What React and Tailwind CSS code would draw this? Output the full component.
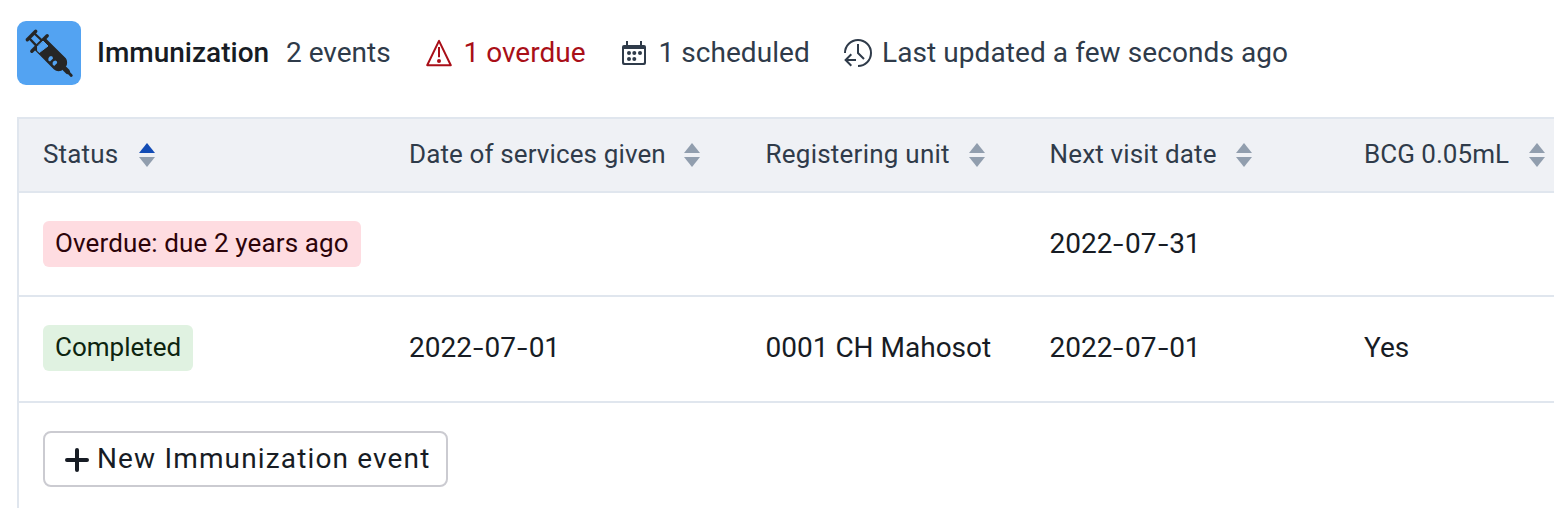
function SyringeIcon() {
  return (
    <svg width="64" height="64" viewBox="0 0 64 64" fill="none" stroke="#262626" strokeLinecap="round" strokeLinejoin="round">
      <path d="M18.7 10.3 10.3 18.7" strokeWidth="3.4" />
      <path d="M17.5 12.5 26 20.5M12.5 17.5 20.5 25.8" strokeWidth="2.4" />
      <path d="M30.2 14.8 14.8 30.2" strokeWidth="3.4" />
      <path d="M28.3 18 48 37.6Q50 40 49 44L44 49Q40 50 37.6 48L18 28.3Z" fill="#262626" strokeWidth="1.6" />
      <path d="M26.3 20.3 31 25 22.3 31.6 20.6 29.8V25.4Z" fill="#53a3f2" stroke="#53a3f2" strokeWidth="1" />
      <path d="M31.4 39.4V37.4Q31.9 35.2 34 35Q36.2 35.2 36 37.4L33 40.6Z" fill="#53a3f2" stroke="none" />
      <path d="M35.6 43.6V41.8Q36 39.8 38.2 39.5Q40.4 39.8 40.2 42L37.2 45Z" fill="#53a3f2" stroke="none" />
      <path d="M46 46 50.5 50.5" strokeWidth="5" />
      <path d="M50 50 54.3 54.5" strokeWidth="2.8" />
    </svg>
  );
}

function WarningIcon() {
  return (
    <svg width="28" height="30" viewBox="0 0 28 30" fill="none" stroke="#a90f18" strokeWidth="2" strokeLinejoin="round">
      <path d="M14 2.9 2.2 27.2H25.8Z" />
      <path d="M14 9V19.3" />
      <circle cx="14" cy="23" r="2" fill="#a90f18" stroke="none" />
    </svg>
  );
}

function CalendarIcon() {
  return (
    <svg width="24" height="24" viewBox="0 0 24 24" fill="#2f3b4a">
      <path fillRule="evenodd" d="M2 4H4V0H6V4H18V0H20V4H22Q24 4 24 6V22Q24 24 22 24H2Q0 24 0 22V6Q0 4 2 4ZM2 8V21Q2 22 3 22H21Q22 22 22 21V8Z" />
      <circle cx="7" cy="12" r="2" />
      <circle cx="12.3" cy="12" r="2" />
      <circle cx="18" cy="12" r="2" />
      <circle cx="7" cy="18" r="2" />
      <circle cx="12.3" cy="18" r="2" />
    </svg>
  );
}

function ClockIcon() {
  return (
    <svg width="28" height="28" viewBox="0 0 28 28" fill="none" stroke="#2f3b4a" strokeWidth="2">
      <path d="M1 14A13 13 0 1 1 14 27" />
      <path d="M14 5V14L20 20" />
      <path d="M12 21H1.6M7.3 15.3 1.6 21 7.3 26.7" />
    </svg>
  );
}

function SortIcon({ active }) {
  return (
    <svg className="mt-0.5 shrink-0" width="16" height="24" viewBox="0 0 16 24">
      <path d="M8 0 16 10H0Z" fill={active ? '#134cb5' : '#919eae'} />
      <path d="M0 14H16L8 24Z" fill="#919eae" />
    </svg>
  );
}

function HeadCell({ children, gap, spacing = 'tracking-[0.15px]', active }) {
  return (
    <div className={`flex items-center whitespace-nowrap ${gap}`}>
      <span className={spacing}>{children}</span>
      <SortIcon active={active} />
    </div>
  );
}

function DateText({ value }) {
  const [y, m, d] = value.split('-');
  const dash = <span className="inline-block w-[12.6px] scale-x-[1.35] text-center">-</span>;
  return <span>{y}{dash}{m}{dash}{d}</span>;
}

const columns = 'grid grid-cols-[366px_356.5px_284px_314.5px_230px] items-center pl-6 w-[1575px]';

export default function App() {
  return (
    <div className="h-[508px] w-full overflow-hidden bg-white pl-[17px] pt-[21px] font-['Roboto',sans-serif] text-[28px] leading-8 text-[#171c24]">
      <header className="flex h-16 items-center whitespace-nowrap text-[#2f3b4a]">
        <div className="h-16 w-16 shrink-0 rounded-[9px] bg-[#53a3f2]"><SyringeIcon /></div>
        <h1 className="ml-4 w-[189px] font-medium text-[#171c24]">Immunization</h1>
        <span className="w-[139px]">2 events</span>
        <div className="flex w-[197px] items-center gap-[10.5px] text-[#a90f18]">
          <WarningIcon /><span>1 overdue</span>
        </div>
        <div className="flex w-[222px] items-center gap-[12.5px] text-[#2f3b4a]">
          <CalendarIcon /><span className="tracking-[0.05px]">1 scheduled</span>
        </div>
        <div className="flex items-center gap-2.5">
          <ClockIcon /><span className="tracking-[0.08px]">Last updated a few seconds ago</span>
        </div>
      </header>

      <section className="mt-8 h-[391px] w-full border-l-2 border-t-2 border-[#e0e6ee]">
        <div className={`${columns} h-[74px] border-b-2 border-[#e0e6ee] bg-[#eff1f5] pb-0.5 text-[26px] text-[#2f3b4a]`}>
          <HeadCell gap="gap-[21px]" active>Status</HeadCell>
          <HeadCell gap="gap-[18.5px]" spacing="tracking-[0.12px]">Date of services given</HeadCell>
          <HeadCell gap="gap-[19px]" spacing="tracking-[0.24px]">Registering unit</HeadCell>
          <HeadCell gap="gap-[19px]">Next visit date</HeadCell>
          <HeadCell gap="gap-[20px]" spacing="tracking-[0.02px]">BCG 0.05mL</HeadCell>
        </div>
        <div className={`${columns} h-[104px] border-b-2 border-[#e0e6ee]`}>
          <div className="flex"><span className="inline-flex h-[46px] items-center rounded-md bg-[#fedce1] px-3 pb-0.5 text-[26px] tracking-[0.12px] text-[#2c0309]">Overdue: due 2 years ago</span></div>
          <div />
          <div />
          <DateText value="2022-07-31" />
          <div />
        </div>
        <div className={`${columns} h-[106px] border-b-2 border-[#e0e6ee] pb-0.5`}>
          <div className="flex"><span className="inline-flex h-[46px] items-center rounded-md bg-[#e0f2e1] px-3 pb-0.5 text-[26px] text-[#0d240f]">Completed</span></div>
          <DateText value="2022-07-01" />
          <span>0001 CH Mahosot</span>
          <DateText value="2022-07-01" />
          <span>Yes</span>
        </div>
        <div className="pl-6 pt-7">
          <button className="flex h-14 w-[405px] items-center gap-2 whitespace-nowrap rounded-lg border-2 border-[#cbcbd1] pl-5">
            <svg className="mt-0.5" width="24" height="24" viewBox="0 0 24 24" stroke="#171c24" strokeWidth="4" strokeLinecap="round">
              <path d="M12 2V22M2 12H22" />
            </svg>
            <span className="tracking-[1.15px]">New Immunization event</span>
          </button>
        </div>
      </section>
    </div>
  );
}
